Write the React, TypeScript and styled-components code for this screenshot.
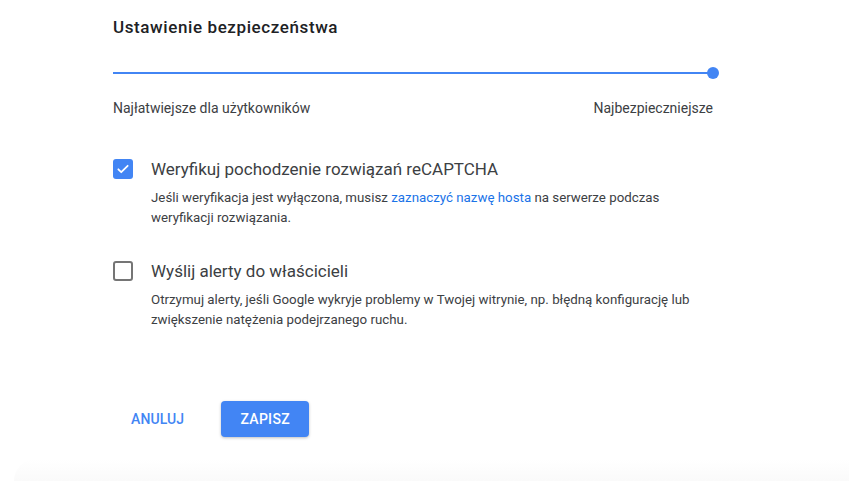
import styled, { createGlobalStyle } from 'styled-components';

const GlobalStyle = createGlobalStyle`
  html, body {
    margin: 0;
    padding: 0;
    background: #ffffff;
  }
  body {
    font-family: Roboto, "Liberation Sans", Arial, sans-serif;
    color: #3c4043;
    -webkit-font-smoothing: antialiased;
  }
`;

const CheckIcon = () => (
  <svg width="14" height="14" viewBox="0 0 24 24" fill="none">
    <path d="M4 12.5l5 5L20 6.5" stroke="#fff" strokeWidth="3" strokeLinecap="round" strokeLinejoin="round" />
  </svg>
);

type OptionProps = {
  checked: boolean;
  title: string;
  children: React.ReactNode;
};

const Option = ({ checked, title, children }: OptionProps) => (
  <S.Option>
    <S.Checkbox $checked={checked}>{checked && <CheckIcon />}</S.Checkbox>
    <S.OptionBody>
      <S.OptionTitle>{title}</S.OptionTitle>
      <S.OptionText>{children}</S.OptionText>
    </S.OptionBody>
  </S.Option>
);

const App = () => {
  return (
    <S.Page>
      <GlobalStyle />
      <S.Content>
        <S.Heading>Ustawienie bezpieczeństwa</S.Heading>
        <S.Slider>
          <S.Track />
          <S.Thumb />
        </S.Slider>
        <S.SliderLabels>
          <span>Najłatwiejsze dla użytkowników</span>
          <span>Najbezpieczniejsze</span>
        </S.SliderLabels>

        <S.Options>
          <Option checked title="Weryfikuj pochodzenie rozwiązań reCAPTCHA">
            Jeśli weryfikacja jest wyłączona, musisz <S.Link href="#">zaznaczyć nazwę hosta</S.Link> na serwerze podczas
            weryfikacji rozwiązania.
          </Option>
          <Option checked={false} title="Wyślij alerty do właścicieli">
            Otrzymuj alerty, jeśli Google wykryje problemy w Twojej witrynie, np. błędną konfigurację lub zwiększenie
            natężenia podejrzanego ruchu.
          </Option>
        </S.Options>

        <S.Actions>
          <S.TextButton>Anuluj</S.TextButton>
          <S.PrimaryButton>Zapisz</S.PrimaryButton>
        </S.Actions>
      </S.Content>
      <S.BottomFade />
    </S.Page>
  );
};

export default App;

const S = {
  Page: styled.div`
    width: 849px;
    height: 481px;
    display: flex;
    flex-direction: column;
    overflow: hidden;
  `,
  Content: styled.div`
    flex: 1;
    padding: 17px 0 0 113px;
    width: 600px;
  `,
  Heading: styled.h2`
    margin: 0;
    font-size: 17px;
    line-height: 20px;
    font-weight: 500;
    letter-spacing: 0.6px;
    color: #202124;
  `,
  Slider: styled.div`
    position: relative;
    margin-top: 30px;
    height: 12px;
    display: flex;
    align-items: center;
  `,
  Track: styled.div`
    width: 100%;
    height: 2px;
    background: #4285f4;
  `,
  Thumb: styled.div`
    position: absolute;
    right: -6px;
    top: 0;
    width: 12px;
    height: 12px;
    border-radius: 50%;
    background: #4285f4;
  `,
  SliderLabels: styled.div`
    margin-top: 19px;
    display: flex;
    justify-content: space-between;
    font-size: 14px;
    line-height: 20px;
    color: #3c4043;
  `,
  Options: styled.div`
    margin-top: 41px;
    display: flex;
    flex-direction: column;
    gap: 33px;
  `,
  Option: styled.div`
    display: flex;
    gap: 18px;
  `,
  Checkbox: styled.div<{ $checked: boolean }>`
    flex: none;
    width: 20px;
    height: 20px;
    box-sizing: border-box;
    border-radius: 3px;
    display: flex;
    align-items: center;
    justify-content: center;
    background: ${(p) => (p.$checked ? '#4285f4' : '#fff')};
    border: ${(p) => (p.$checked ? 'none' : '2px solid #757575')};
  `,
  OptionBody: styled.div`
    display: flex;
    flex-direction: column;
    gap: 9px;
  `,
  OptionTitle: styled.div`
    font-size: 17px;
    line-height: 20px;
    color: #3c4043;
  `,
  OptionText: styled.div`
    font-size: 13.3px;
    line-height: 20px;
    color: #3c4043;
    max-width: 564px;
  `,
  Link: styled.a`
    color: #1a73e8;
    text-decoration: none;
  `,
  Actions: styled.div`
    margin-top: 71px;
    display: flex;
    align-items: center;
    gap: 19px;
  `,
  TextButton: styled.button`
    height: 36px;
    padding: 0 18px;
    border: none;
    background: transparent;
    color: #4285f4;
    font-family: inherit;
    font-size: 14px;
    font-weight: 500;
    letter-spacing: 0.1px;
    text-transform: uppercase;
    cursor: pointer;
  `,
  PrimaryButton: styled.button`
    height: 36px;
    width: 88px;
    border: none;
    border-radius: 4px;
    background: #4285f4;
    color: #fff;
    font-family: inherit;
    font-size: 14px;
    font-weight: 500;
    letter-spacing: 0.3px;
    text-transform: uppercase;
    box-shadow: 0 1px 3px rgba(0, 0, 0, 0.25);
    cursor: pointer;
  `,
  BottomFade: styled.div`
    height: 22px;
    margin-left: 14px;
    border-radius: 40px 0 0 0;
    background: linear-gradient(#ffffff, #fafafa);
  `,
};
